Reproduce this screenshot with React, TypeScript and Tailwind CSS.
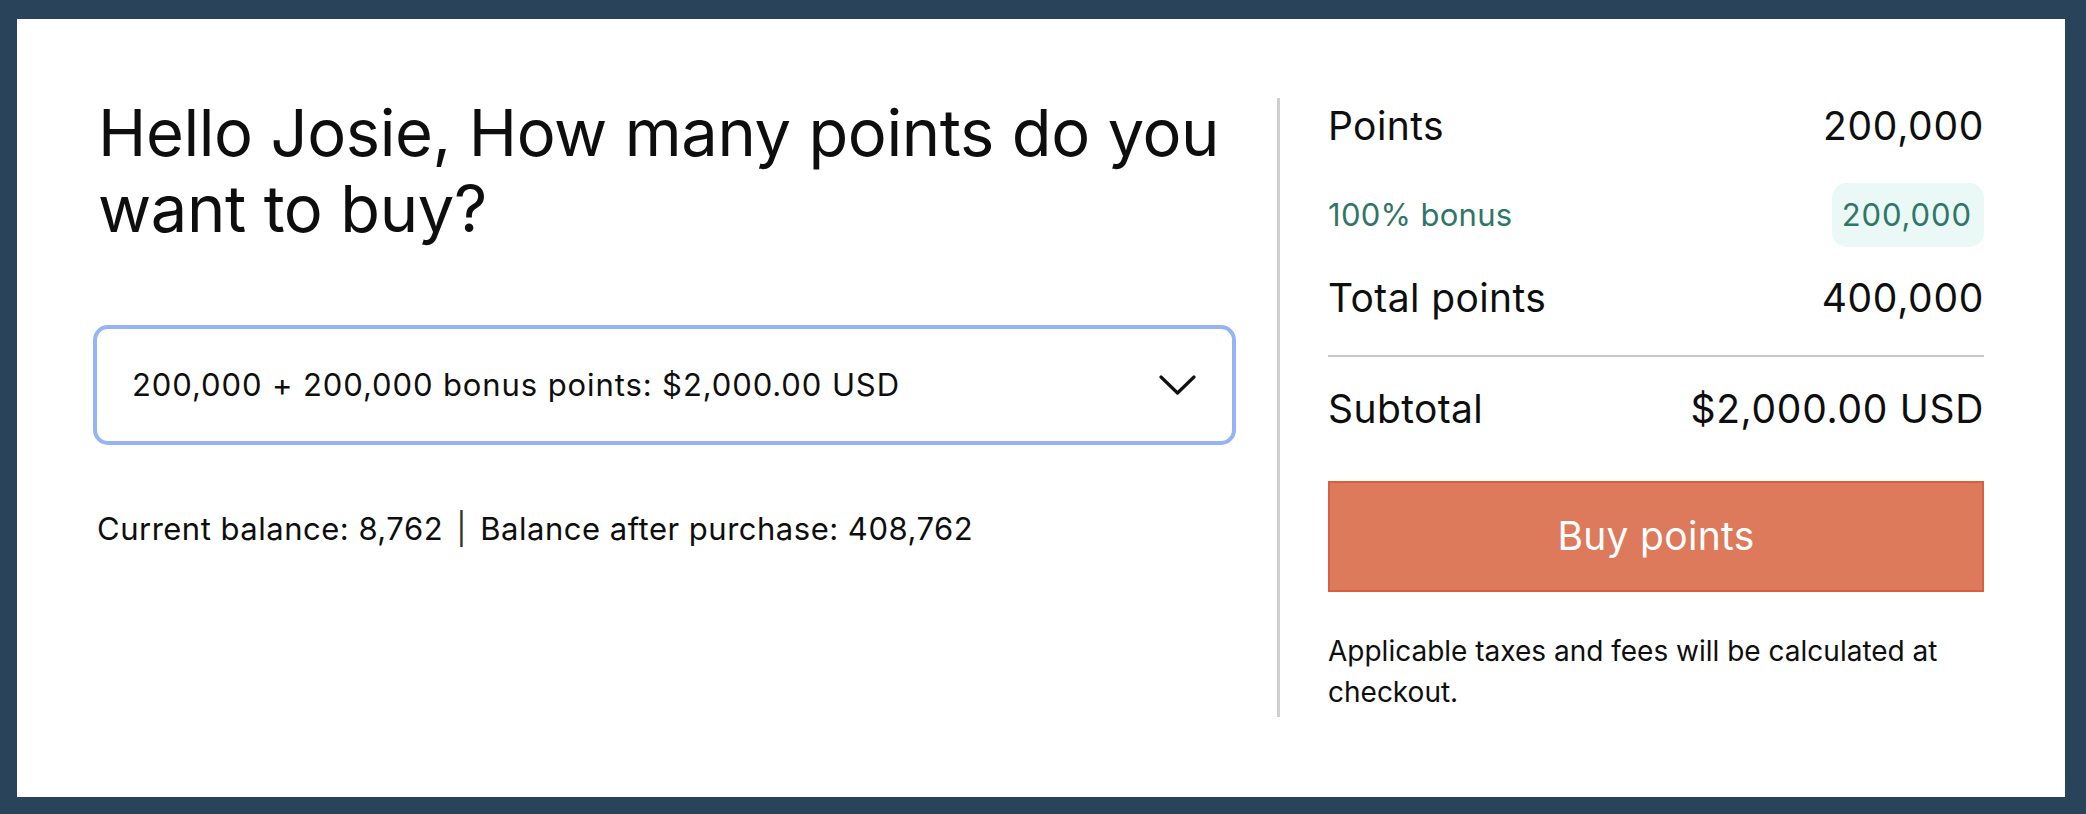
import React from 'react';

const font = { fontFamily: 'Inter, "Liberation Sans", sans-serif' };

const SummaryRow: React.FC<{ label: string; value: string; className?: string }> = ({ label, value, className = '' }) => (
  <div className={`flex items-center justify-between text-[39px] leading-[48px] text-[#0e0e0e] ${className}`}>
    <span className="tracking-[0.4px]">{label}</span>
    <span className="tracking-[0.7px]">{value}</span>
  </div>
);

const App: React.FC = () => {
  return (
    <div className="w-full h-[814px] bg-[#29435a] pt-[19px] pl-[17px] pr-[21px] pb-[17px] flex" style={font}>
      <div className="flex-1 bg-white flex pl-[76px] pr-[81px] pt-[79px] pb-[80px]">
        {/* left: greeting and package picker */}
        <div className="w-[1143px] flex flex-col">
          <h1 className="-mt-[3px] ml-[5px] text-[65px] leading-[76px] font-normal text-[#0e0e0e] tracking-[-0.4px]">
            Hello Josie, How many points do you want to buy?
          </h1>

          <div className="mt-[78px] h-[120px] border-4 border-[#95b3f5] rounded-[15px] flex items-center justify-between pl-[35px] pr-[36px]">
            <span className="text-[31px] tracking-[0.9px] text-[#0e0e0e]">200,000 + 200,000 bonus points: $2,000.00 USD</span>
            <svg width="37" height="21" viewBox="0 0 37 21" fill="none">
              <polyline points="2,2 18.5,18 35,2" stroke="#111" strokeWidth="3.2" strokeLinecap="round" strokeLinejoin="round" />
            </svg>
          </div>

          <p className="mt-[66px] ml-[4px] text-[31px] leading-[36px] tracking-[0.5px] text-[#0e0e0e]">
            Current balance: 8,762 <span className="mx-[4px] text-[#333]">|</span> Balance after purchase: 408,762
          </p>
        </div>

        <div className="ml-[41px] w-[3px] bg-[#cfcfcf]" />

        {/* right: order summary */}
        <div className="ml-[48px] w-[656px] flex flex-col">
          <SummaryRow label="Points" value="200,000" className="mt-[4px]" />

          <div className="mt-[33px] h-[64px] flex items-center justify-between text-[31px] text-[#2f7669]">
            <span className="tracking-[0.3px]">100% bonus</span>
            <span className="h-full flex items-center rounded-[15px] bg-[#eaf8f6] pl-[10px] pr-[12px] tracking-[0.9px]">200,000</span>
          </div>

          <SummaryRow label="Total points" value="400,000" className="mt-[27px]" />

          <div className="mt-[33px] h-[2px] bg-[#c4c8cc]" />

          <SummaryRow label="Subtotal" value="$2,000.00 USD" className="mt-[28px]" />

          <button className="mt-[48px] h-[111px] w-full bg-[#dd7a5c] border-2 border-[#d9603e] text-white text-[39px] tracking-[0.3px]">
            Buy points
          </button>

          <p className="mt-[39px] text-[28px] leading-[41px] text-[#0e0e0e]">
            Applicable taxes and fees will be calculated at checkout.
          </p>
        </div>
      </div>
    </div>
  );
};

export default App;
